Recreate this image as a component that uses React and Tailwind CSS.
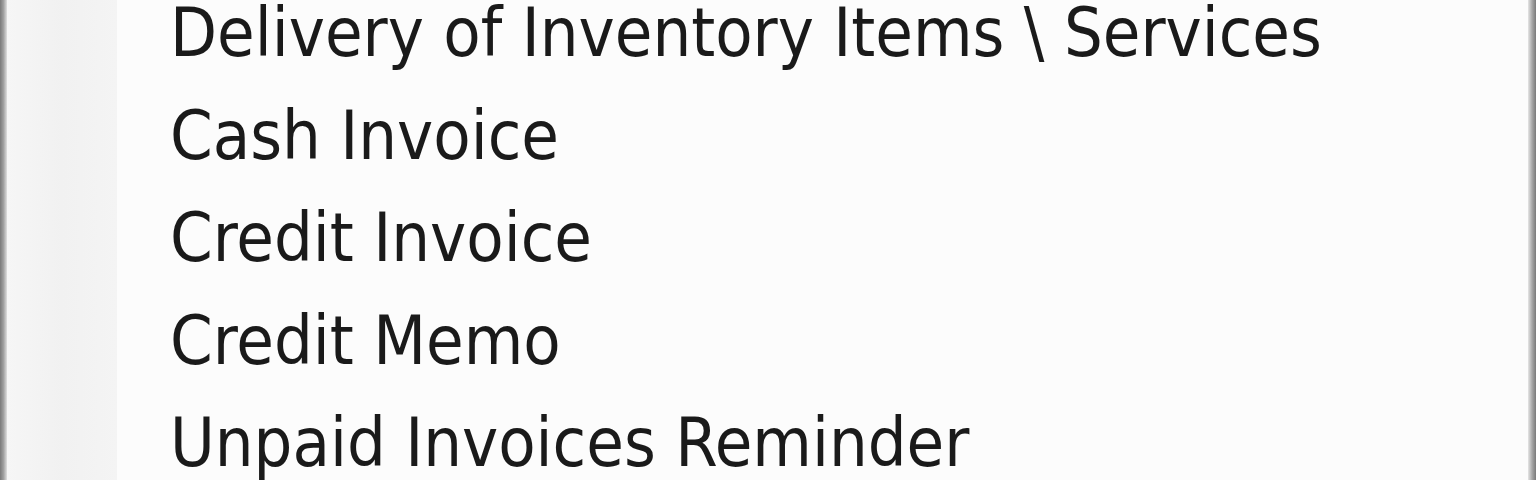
export default function App() {
  const items = [
    "Delivery of Inventory Items \\ Services",
    "Cash Invoice",
    "Credit Invoice",
    "Credit Memo",
    "Unpaid Invoices Reminder",
  ];
  return (
    <div className="w-[1536px] h-[480px] overflow-hidden flex bg-[#fcfcfc]">
      <div className="w-[7px] shrink-0 bg-gradient-to-r from-[#7a7a7a] via-[#a0a0a0] to-[#e0e0e0]" />
      <div className="w-[110px] shrink-0 bg-gradient-to-r from-[#f6f6f6] via-[#f1f1f1] to-[#f4f4f4]" />
      <div className="flex-1 flex flex-col pl-[53px] pt-[6px]">
        {items.map((t) => (
          <div
            key={t}
            className="h-[102.5px] shrink-0 text-[#1a1a1a] text-[68px] leading-[54px] whitespace-nowrap"
            style={{ fontFamily: '"DejaVu Sans Condensed", "DejaVu Sans", sans-serif', fontStretch: "condensed" }}
          >
            {t}
          </div>
        ))}
      </div>
      <div className="w-[8px] shrink-0 bg-gradient-to-r from-[#e6e6e6] via-[#a8a8a8] to-[#7a7a7a]" />
    </div>
  );
}
